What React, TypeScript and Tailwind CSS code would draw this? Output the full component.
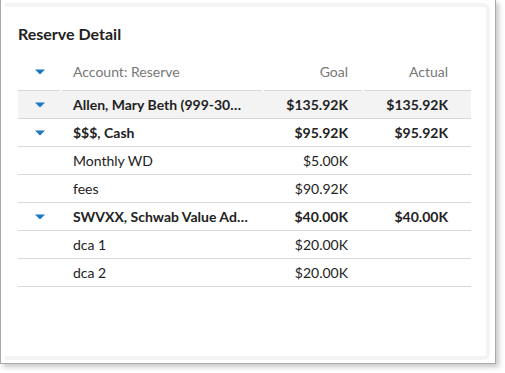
import React from 'react';

type Row = {
  name: string;
  goal: string;
  actual?: string;
  bold?: boolean;
  caret?: boolean;
  shaded?: boolean;
};

const rows: Row[] = [
  { name: 'Allen, Mary Beth (999-30…', goal: '$135.92K', actual: '$135.92K', bold: true, caret: true, shaded: true },
  { name: '$$$, Cash', goal: '$95.92K', actual: '$95.92K', bold: true, caret: true },
  { name: 'Monthly WD', goal: '$5.00K' },
  { name: 'fees', goal: '$90.92K' },
  { name: 'SWVXX, Schwab Value Ad…', goal: '$40.00K', actual: '$40.00K', bold: true, caret: true },
  { name: 'dca 1', goal: '$20.00K' },
  { name: 'dca 2', goal: '$20.00K' },
];

function Caret() {
  return (
    <svg width="10" height="6" viewBox="0 0 10 6" className="block">
      <path d="M0 0.5 H10 L5 5.5 Z" fill="#1b78c2" />
    </svg>
  );
}

const cols = 'grid grid-cols-[44px_200px_98px_111px]';

export default function App() {
  return (
    <div className="w-[505px] h-[373px] bg-white font-['Lato',_'Open_Sans',_sans-serif]">
      <div className="w-[496px] h-[364px] border-l border-r border-b border-[#a9a9a9] shadow-[3px_3px_5px_rgba(0,0,0,0.22)] pt-[3px] pl-[4px] pr-[5px] pb-[3px] bg-white">
        <div className="h-full rounded-r-[6px] border-t-4 border-r-4 border-b-4 border-[#f4f4f4] pl-[13px] pr-[15px] pt-[17px]">
          <h2 className="text-[16px] leading-[20px] font-bold text-[#222]">Reserve Detail</h2>

          <div className={`${cols} h-[33px] mt-[13px] items-center pb-[4px] text-[14px] text-[#777]`}>
            <div className="flex justify-center">
              <Caret />
            </div>
            <div className="pl-[11px]">Account: Reserve</div>
            <div className="text-right pr-[12px]">Goal</div>
            <div className="text-right pr-[23px]">Actual</div>
          </div>
          <div className="grid grid-cols-[42px_200px_98px_107px] gap-x-[2px] h-px w-[453px]">
            <div className="bg-[#d8d8d8]" />
            <div className="bg-[#d8d8d8]" />
            <div className="bg-[#d8d8d8]" />
            <div className="bg-[#d8d8d8]" />
          </div>

          {rows.map((r) => (
            <div
              key={r.name}
              className={`${cols} h-[28px] items-center border-b border-[#d8d8d8] text-[14px] text-[#222] ${
                r.bold ? 'font-bold' : ''
              } ${r.shaded ? 'bg-[#f3f3f3]' : ''}`}
            >
              <div className="flex justify-center">{r.caret && <Caret />}</div>
              <div className="pl-[11px] whitespace-nowrap overflow-hidden">{r.name}</div>
              <div className="text-right pr-[12px]">{r.goal}</div>
              <div className="text-right pr-[23px]">{r.actual}</div>
            </div>
          ))}
        </div>
      </div>
    </div>
  );
}
